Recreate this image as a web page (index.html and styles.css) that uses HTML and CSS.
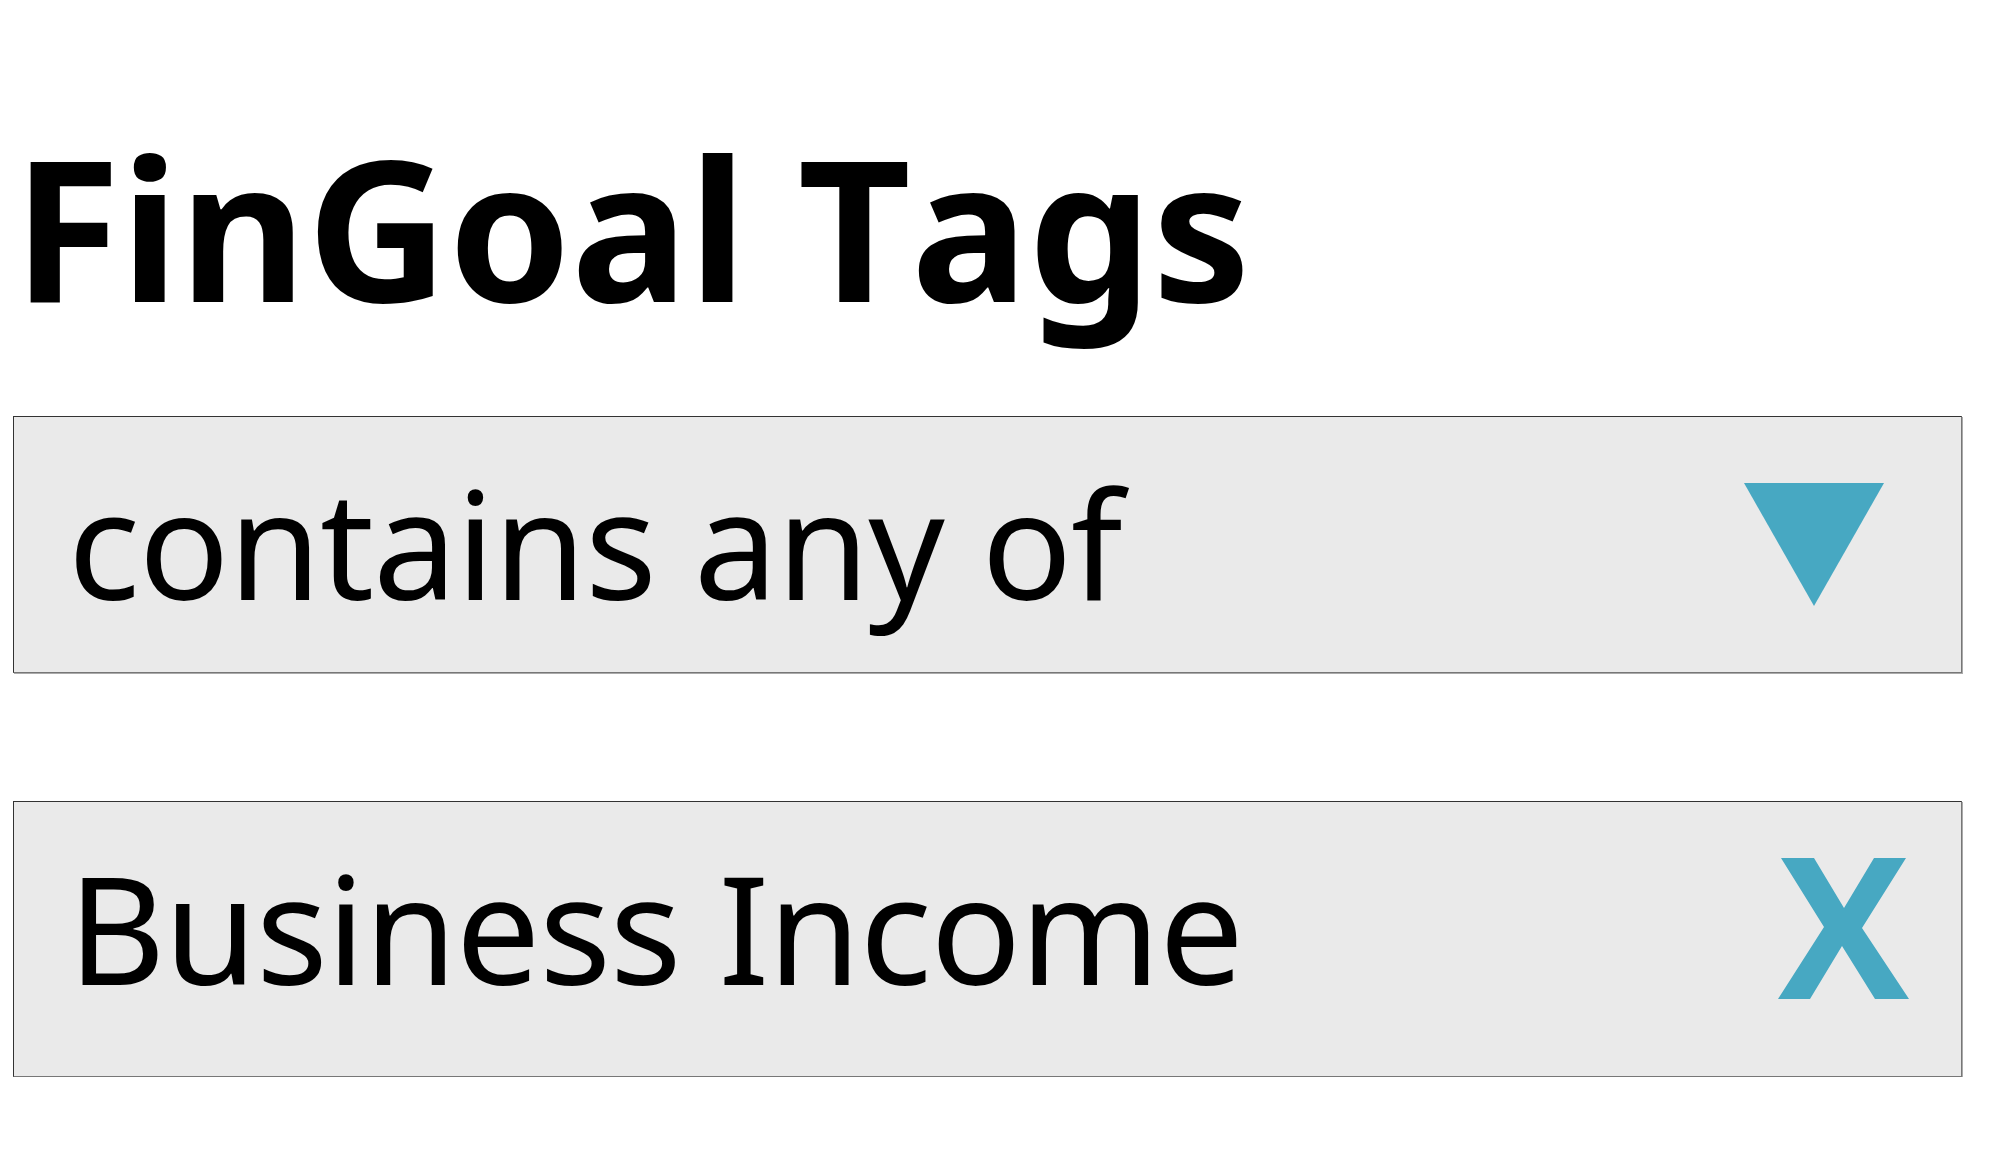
FILE: index.html
```html
<!DOCTYPE html>
<html lang="en">
<head>
    <meta charset="UTF-8">
    <meta name="viewport" content="width=device-width, initial-scale=1.0">
    <title>FinGoal Tags</title>
    <link rel="stylesheet" href="styles.css">
</head>
<body>

    <div class="page">
        <h1 class="title">FinGoal Tags</h1>

        <div class="field field-select">
            <span class="field-text">contains any of</span>
            <svg class="icon-caret" width="140" height="123" viewBox="0 0 140 123">
                <polygon points="0,0 140,0 70,123" />
            </svg>
        </div>

        <div class="field field-tag">
            <span class="field-text">Business Income</span>
            <svg class="icon-remove" width="131" height="141" viewBox="0 0 131 141">
                <polygon points="3,0 36,0 66,50 96,0 128,0 84,70 131,141 97,141 64,88 32,141 0,141 46,69" />
            </svg>
        </div>
    </div>

</body>
</html>
```

FILE: styles.css
```css
body {
    margin: 0;
    background-color: #fff;
    font-family: "Noto Sans", "Open Sans", sans-serif;
    color: #000;
}
.page {
    padding: 92px 38px 0 13px;
}
.title {
    margin: 0;
    font-size: 196px;
    font-weight: 700;
    line-height: normal;
    font-kerning: none;
}
.field {
    box-sizing: border-box;
    display: flex;
    justify-content: space-between;
    align-items: flex-start;
    background-color: #eaeaea;
    border: 1px solid #333;
    border-right-color: #777;
    border-bottom-color: #777;
    box-shadow: 1px 1px 0 #aaa;
    padding: 23px 0 0 54px;
}
.field-text {
    font-size: 150px;
    line-height: normal;
    letter-spacing: -1.15px;
}
.field svg {
    fill: #47a8c2;
    flex-shrink: 0;
}
.field-select {
    height: 257px;
    margin-top: 57px;
    padding-right: 77px;
}
.icon-caret {
    margin-top: 43px;
}
.field-tag {
    height: 276px;
    margin-top: 128px;
    padding-right: 52px;
}
.icon-remove {
    margin-top: 33px;
}
```
